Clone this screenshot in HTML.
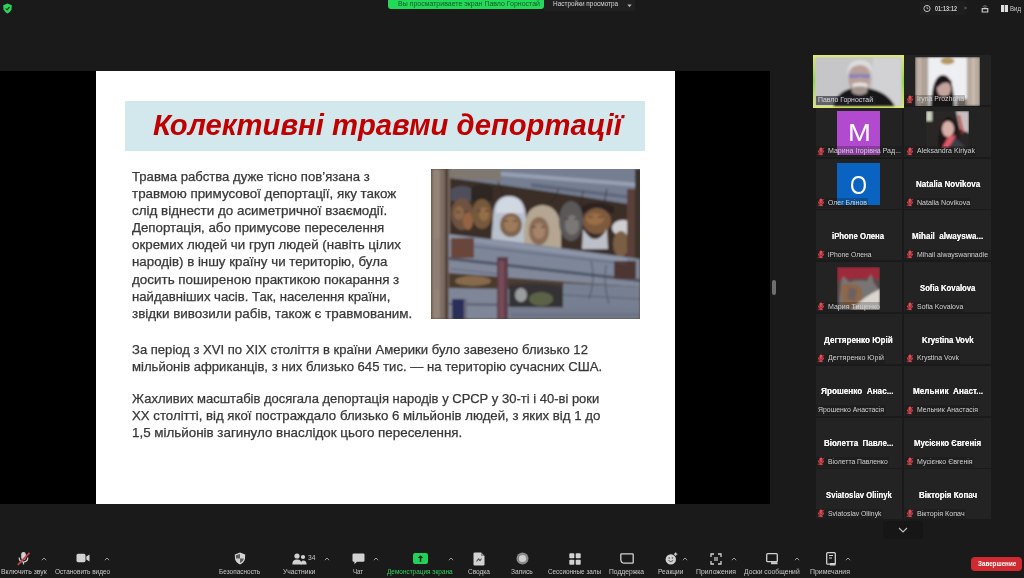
<!DOCTYPE html>
<html><head><meta charset="utf-8">
<style>
*{margin:0;padding:0;box-sizing:border-box}
html,body{width:1024px;height:578px;overflow:hidden;background:#1a1a1a;font-family:"Liberation Sans",sans-serif;position:relative}
.a{position:absolute}
.t{white-space:nowrap;line-height:1}
svg{display:block}
</style></head><body>

<svg class="a" style="left:2px;top:3px" width="11" height="11" viewBox="0 0 11 11"><path d="M5.5 0.6 L9.8 2.3 L9.5 6.3 Q8.5 9.1 5.5 10.5 Q2.5 9.1 1.5 6.3 L1.2 2.3 Z" fill="#2bd45c"/><path d="M3.6 5.4 L5.0 6.8 L7.5 4.0" stroke="#0c3d1a" stroke-width="1.2" fill="none"/></svg>
<div class="a" style="left:388.00px;top:-3.00px;width:156.00px;height:12.00px;background:#23d958;border-radius:3px"></div>
<div class="a t" style="left:398.00px;top:0.37px;font-size:7px;color:#155a2a;font-weight:normal;font-style:normal;transform:scaleX(0.9967);transform-origin:0 0;">Вы просматриваете экран Павло Горностай</div>
<div class="a" style="left:544.00px;top:0.00px;width:91.00px;height:10.50px;background:#202020;"></div>
<div class="a t" style="left:552.80px;top:0.07px;font-size:7px;color:#d8d8d8;font-weight:normal;font-style:normal;transform:scaleX(0.9197);transform-origin:0 0;">Настройки просмотра</div>
<svg class="a" style="left:627px;top:3.5px" width="5" height="4" viewBox="0 0 5 4"><path d="M0.3 0.5 L4.7 0.5 L2.5 3.3Z" fill="#b0b0b0"/></svg>
<div class="a" style="left:920.00px;top:1.00px;width:46.00px;height:14.00px;background:#1e1e1e;border-radius:2px"></div>
<svg class="a" style="left:923px;top:4px" width="8" height="9" viewBox="0 0 8 9"><circle cx="4" cy="4.5" r="3.1" stroke="#bdbdbd" stroke-width="1" fill="none"/><path d="M4 2.6v2h1.3" stroke="#bdbdbd" stroke-width="0.8" fill="none"/></svg>
<div class="a t" style="left:935.00px;top:4.53px;font-size:8px;color:#cfcfcf;font-weight:bold;font-style:normal;transform:scaleX(0.6868);transform-origin:0 0;">01:13:12</div>
<svg class="a" style="left:964px;top:6px" width="4" height="4" viewBox="0 0 4 4"><path d="M0.5 0.5 L3.5 2 L0.5 3.5z" fill="#555"/></svg>
<svg class="a" style="left:981px;top:3px" width="8" height="10" viewBox="0 0 8 10"><path d="M1.2 5.6h5.6v3.4h-5.6z" stroke="#d0d0d0" stroke-width="1.1" fill="none"/><path d="M1.8 3.6 Q4 1.6 6.2 3.6" stroke="#888" stroke-width="0.8" fill="none"/><path d="M2.8 4.6 Q4 3.6 5.2 4.6" stroke="#888" stroke-width="0.7" fill="none"/></svg>
<div class="a" style="left:1001.00px;top:5.00px;width:7.00px;height:7.00px;background:#dedede;"></div>
<div class="a" style="left:1004.00px;top:5.00px;width:1.00px;height:7.00px;background:#555;"></div>
<div class="a t" style="left:1010.00px;top:5.07px;font-size:7px;color:#cfcfcf;font-weight:normal;font-style:normal;transform:scaleX(0.8681);transform-origin:0 0;">Вид</div>
<div class="a" style="left:0.00px;top:71.00px;width:770.00px;height:433.00px;background:#000;"></div>
<div class="a" style="left:96.00px;top:71.00px;width:579.00px;height:433.00px;background:#fff;"></div>
<div class="a" style="left:125.00px;top:101.00px;width:520.00px;height:50.00px;background:#d2e8ec;"></div>
<div class="a t" style="left:152.80px;top:110.85px;font-size:29px;color:#c00000;font-weight:bold;font-style:italic;transform:scaleX(1.0078);transform-origin:0 0;">Колективні травми депортації</div>
<div class="a t" style="left:132.20px;top:170.67px;font-size:12.2px;color:#383838;font-weight:normal;font-style:normal;transform:scaleX(1.0773);transform-origin:0 0;-webkit-text-stroke:0.25px #383838;">Травма рабства дуже тісно пов’язана з</div>
<div class="a t" style="left:132.20px;top:187.82px;font-size:12.2px;color:#383838;font-weight:normal;font-style:normal;transform:scaleX(1.0985);transform-origin:0 0;-webkit-text-stroke:0.25px #383838;">травмою примусової депортації, яку також</div>
<div class="a t" style="left:132.20px;top:204.97px;font-size:12.2px;color:#383838;font-weight:normal;font-style:normal;transform:scaleX(1.1004);transform-origin:0 0;-webkit-text-stroke:0.25px #383838;">слід віднести до асиметричної взаємодії.</div>
<div class="a t" style="left:132.20px;top:222.12px;font-size:12.2px;color:#383838;font-weight:normal;font-style:normal;transform:scaleX(1.0891);transform-origin:0 0;-webkit-text-stroke:0.25px #383838;">Депортація, або примусове переселення</div>
<div class="a t" style="left:132.20px;top:239.27px;font-size:12.2px;color:#383838;font-weight:normal;font-style:normal;transform:scaleX(1.0929);transform-origin:0 0;-webkit-text-stroke:0.25px #383838;">окремих людей чи груп людей (навіть цілих</div>
<div class="a t" style="left:132.20px;top:256.42px;font-size:12.2px;color:#383838;font-weight:normal;font-style:normal;transform:scaleX(1.0911);transform-origin:0 0;-webkit-text-stroke:0.25px #383838;">народів) в іншу країну чи територію, була</div>
<div class="a t" style="left:132.20px;top:273.57px;font-size:12.2px;color:#383838;font-weight:normal;font-style:normal;transform:scaleX(1.1008);transform-origin:0 0;-webkit-text-stroke:0.25px #383838;">досить поширеною практикою покарання з</div>
<div class="a t" style="left:132.20px;top:290.72px;font-size:12.2px;color:#383838;font-weight:normal;font-style:normal;transform:scaleX(1.0778);transform-origin:0 0;-webkit-text-stroke:0.25px #383838;">найдавніших часів. Так, населення країни,</div>
<div class="a t" style="left:132.20px;top:307.87px;font-size:12.2px;color:#383838;font-weight:normal;font-style:normal;transform:scaleX(1.1018);transform-origin:0 0;-webkit-text-stroke:0.25px #383838;">звідки вивозили рабів, також є травмованим.</div>
<div class="a t" style="left:132.20px;top:343.97px;font-size:12.2px;color:#383838;font-weight:normal;font-style:normal;transform:scaleX(1.0716);transform-origin:0 0;-webkit-text-stroke:0.25px #383838;">За період з XVI по XIX століття в країни Америки було завезено близько 12</div>
<div class="a t" style="left:132.20px;top:361.07px;font-size:12.2px;color:#383838;font-weight:normal;font-style:normal;transform:scaleX(1.0753);transform-origin:0 0;-webkit-text-stroke:0.25px #383838;">мільйонів африканців, з них близько 645 тис. — на територію сучасних США.</div>
<div class="a t" style="left:132.20px;top:393.47px;font-size:12.2px;color:#383838;font-weight:normal;font-style:normal;transform:scaleX(1.0668);transform-origin:0 0;-webkit-text-stroke:0.25px #383838;">Жахливих масштабів досягала депортація народів у СРСР у 30-ті і 40-ві роки</div>
<div class="a t" style="left:132.20px;top:410.27px;font-size:12.2px;color:#383838;font-weight:normal;font-style:normal;transform:scaleX(1.0855);transform-origin:0 0;-webkit-text-stroke:0.25px #383838;">XX столітті, від якої постраждало близько 6 мільйонів людей, з яких від 1 до</div>
<div class="a t" style="left:132.20px;top:427.07px;font-size:12.2px;color:#383838;font-weight:normal;font-style:normal;transform:scaleX(1.0972);transform-origin:0 0;-webkit-text-stroke:0.25px #383838;">1,5 мільйонів загинуло внаслідок цього переселення.</div>
<svg class="a" style="left:431px;top:169px" width="209" height="150" viewBox="0 0 209 150">
<defs>
<filter id="bl" x="-5%" y="-5%" width="110%" height="110%"><feGaussianBlur stdDeviation="1.0"/></filter>
<clipPath id="pc"><rect width="209" height="150"/></clipPath>
</defs>
<g clip-path="url(#pc)">
<rect width="209" height="150" fill="#4a3c32"/>
<g filter="url(#bl)">
<!-- dark interior -->
<rect x="18" y="0" width="191" height="95" fill="#3a2e28"/>
<!-- top plank -->
<path d="M18 -2 L209 -2 L209 37 Q120 22 18 9 Z" fill="#767e92"/>
<path d="M18 -2 L70 -2 L70 12 L18 9Z" fill="#7e7870"/>
<path d="M70 3 L209 14 L209 18 L70 7Z" fill="#98a0b2"/>
<path d="M100 14 L209 28 L209 31 L100 18Z" fill="#5e6678"/>
<!-- left post -->
<rect x="0" y="0" width="19" height="150" fill="#7c6c62"/>
<rect x="2" y="0" width="7" height="150" fill="#948478"/>
<rect x="14" y="0" width="3" height="150" fill="#4e3a32"/>
<rect x="3" y="70" width="6" height="50" fill="#8e7e74"/>
<!-- face 1 -->
<path d="M20 20 Q30 14 42 20 L42 32 L20 32Z" fill="#50505c"/>
<ellipse cx="31" cy="45" rx="11" ry="16" fill="#6e5240"/>
<ellipse cx="28" cy="44" rx="5" ry="7" fill="#8a6848"/>
<ellipse cx="37" cy="52" rx="5" ry="9" fill="#946444"/>
<!-- face 2 -->
<path d="M40 19 Q51 12 62 19 L62 32 L40 32Z" fill="#2e2824"/>
<ellipse cx="51" cy="45" rx="10" ry="15" fill="#76583c"/>
<ellipse cx="53" cy="45" rx="5" ry="7" fill="#946e46"/>
<!-- white scarf woman -->
<path d="M62 50 Q62 27 78 27 Q95 27 95 50 L96 76 L60 76Z" fill="#b8c0cc"/>
<path d="M65 44 Q65 28 78 28 Q92 28 92 44Z" fill="#d2d8e2"/>
<ellipse cx="80" cy="56" rx="11" ry="12" fill="#806450"/>
<ellipse cx="80" cy="55" rx="7" ry="8" fill="#9c7c5c"/>
<!-- beige scarf woman -->
<path d="M93 62 Q94 36 112 36 Q129 37 130 62 L130 80 L93 80Z" fill="#b4a692"/>
<ellipse cx="108" cy="62" rx="10" ry="14" fill="#8a6c56"/>
<ellipse cx="108" cy="62" rx="6" ry="8" fill="#a4846a"/>
<!-- gray man -->
<ellipse cx="140" cy="52" rx="12" ry="20" fill="#5a5858"/>
<ellipse cx="141" cy="56" rx="7" ry="10" fill="#7a7876"/>
<!-- bearded man -->
<path d="M151 37 Q167 30 183 38 L183 44 L151 44Z" fill="#2a2420"/>
<ellipse cx="166" cy="52" rx="14" ry="13" fill="#7e5a3c"/>
<ellipse cx="164" cy="50" rx="9" ry="6" fill="#9a6e48"/>
<path d="M152 60 Q164 80 176 60 L177 80 L151 80Z" fill="#bcc0c8"/>
<!-- white-hat man -->
<ellipse cx="192" cy="59" rx="11" ry="8" fill="#cfcfd2"/>
<ellipse cx="190" cy="75" rx="8" ry="13" fill="#7a5e44"/>
<!-- right post -->
<rect x="196" y="20" width="8" height="90" fill="#5a4038"/>
<rect x="204" y="0" width="5" height="150" fill="#3a302a"/>
<!-- lower plank 1 sloping -->
<path d="M18 65 L100 75 L196 88 L209 90 L209 112 L18 90Z" fill="#7e869a"/>
<path d="M18 66 L196 89 L196 93 L18 70Z" fill="#8e96a8"/>
<path d="M18 88 L209 110 L209 113 L18 91Z" fill="#4e5668"/>
<!-- plank 2 -->
<path d="M18 91 L209 113 L209 118 L18 105Z" fill="#80889a"/>
<!-- left gap with faces -->
<path d="M18 104 L70 108 L70 120 L18 120Z" fill="#4a3a2c"/>
<ellipse cx="42" cy="112" rx="18" ry="5" fill="#866a4c"/>
<!-- plank 3 left -->
<path d="M18 119 L78 120 L78 150 L18 150Z" fill="#7e8698"/>
<path d="M18 134 L78 135 L78 137 L18 136Z" fill="#545c6e"/>
<!-- right gap with hands -->
<path d="M78 116 Q110 112 132 118 L132 138 L78 138Z" fill="#343234"/>
<ellipse cx="90" cy="126" rx="6" ry="7" fill="#9a9c9e"/>
<ellipse cx="110" cy="130" rx="12" ry="7" fill="#5c6246"/>
<!-- right lower plank -->
<path d="M132 114 L209 118 L209 140 L132 140Z" fill="#768092"/>
<path d="M78 138 L209 139 L209 150 L78 150Z" fill="#747c8e"/>
<!-- patches -->
<rect x="20" y="69" width="23" height="20" fill="#6a4438"/>
<rect x="183" y="92" width="22" height="18" fill="#4e3632"/>
<!-- middle post -->
<rect x="66" y="88" width="11" height="62" fill="#5a3c48"/>
<rect x="68" y="92" width="5" height="58" fill="#7a4c56"/>
<!-- bracket -->
<rect x="21" y="130" width="12" height="20" fill="#2c2e58"/>
<rect x="33" y="130" width="3" height="20" fill="#6a6a7a"/>
<!-- details -->
<g opacity="0.85">
<path d="M50 18 L40 30 M67 12 L72 26 M128 20 L120 34 M152 22 L150 36 M176 20 L172 40" stroke="#2a2420" stroke-width="0.9" fill="none"/>
<path d="M25 43 h4 M33 43 h4 M46 42 h4 M54 42 h4 M73 52 h4 M82 52 h4 M101 58 h4 M110 58 h4 M134 50 h4 M143 50 h4 M157 48 h5 M167 48 h5" stroke="#3a2a22" stroke-width="1.2"/>

<path d="M20 75 L196 95 M20 100 L78 106 M132 126 L209 130 M80 146 L209 146" stroke="#4a5264" stroke-width="0.8" fill="none"/>
<path d="M160 92 Q165 110 158 130 M175 96 Q172 115 178 135" stroke="#3e4656" stroke-width="0.9" fill="none"/>
</g>
</g>
</g>
</svg>
<div class="a" style="left:772.00px;top:280.00px;width:4.00px;height:15.00px;background:#6e6e6e;border-radius:2px"></div>
<div class="a" style="left:815.50px;top:55.00px;width:86.50px;height:50.00px;background:#232323;"></div>
<div class="a" style="left:904.00px;top:55.00px;width:87.00px;height:50.00px;background:#232323;"></div>
<div class="a" style="left:815.50px;top:106.80px;width:86.50px;height:50.00px;background:#232323;"></div>
<div class="a" style="left:904.00px;top:106.80px;width:87.00px;height:50.00px;background:#232323;"></div>
<div class="a" style="left:815.50px;top:158.60px;width:86.50px;height:50.00px;background:#232323;"></div>
<div class="a" style="left:904.00px;top:158.60px;width:87.00px;height:50.00px;background:#232323;"></div>
<div class="a" style="left:815.50px;top:210.40px;width:86.50px;height:50.00px;background:#232323;"></div>
<div class="a" style="left:904.00px;top:210.40px;width:87.00px;height:50.00px;background:#232323;"></div>
<div class="a" style="left:815.50px;top:262.20px;width:86.50px;height:50.00px;background:#232323;"></div>
<div class="a" style="left:904.00px;top:262.20px;width:87.00px;height:50.00px;background:#232323;"></div>
<div class="a" style="left:815.50px;top:314.00px;width:86.50px;height:50.00px;background:#232323;"></div>
<div class="a" style="left:904.00px;top:314.00px;width:87.00px;height:50.00px;background:#232323;"></div>
<div class="a" style="left:815.50px;top:365.80px;width:86.50px;height:50.00px;background:#232323;"></div>
<div class="a" style="left:904.00px;top:365.80px;width:87.00px;height:50.00px;background:#232323;"></div>
<div class="a" style="left:815.50px;top:417.60px;width:86.50px;height:50.00px;background:#232323;"></div>
<div class="a" style="left:904.00px;top:417.60px;width:87.00px;height:50.00px;background:#232323;"></div>
<div class="a" style="left:815.50px;top:469.40px;width:86.50px;height:50.00px;background:#232323;"></div>
<div class="a" style="left:904.00px;top:469.40px;width:87.00px;height:50.00px;background:#232323;"></div>
<svg class="a" style="left:813px;top:54.5px" width="91" height="53" viewBox="0 0 91 53">
<defs><filter id="gb"><feGaussianBlur stdDeviation="0.9"/></filter>
<linearGradient id="bd" x1="0" y1="0" x2="0" y2="1"><stop offset="0" stop-color="#e2ec6c"/><stop offset="0.5" stop-color="#86dc36"/><stop offset="1" stop-color="#e2ec6c"/></linearGradient></defs>
<rect x="0" y="0" width="91" height="53" fill="url(#bd)"/>
<rect x="2.5" y="2.5" width="86" height="48" fill="#c9c9cb"/>
<g filter="url(#gb)">
<rect x="2.5" y="2.5" width="86" height="48" fill="#c6c6c8"/>
<rect x="60" y="2.5" width="28" height="48" fill="#d2d2d4"/>
<path d="M20 51 Q24 36 40 33 L54 33 Q74 36 82 51Z" fill="#181818"/>
<ellipse cx="46.5" cy="24" rx="11" ry="15" fill="#b8a098"/>
<path d="M34 20 Q34 5 47 5 Q60 5 60 20 Q58 11 47 10 Q36 11 34 20Z" fill="#dcdcdc"/>
<path d="M36 19 H57 V23 Q52 24 47 22 Q42 24 36 23Z" fill="#8a84b8"/>
<path d="M39 29 Q47 26 55 29 L54 32 Q47 30 40 32Z" fill="#e4e4e4"/>
<ellipse cx="46.5" cy="36" rx="8" ry="4" fill="#a09490"/>
</g>
</svg>
<div class="a" style="left:815.50px;top:95.50px;width:60.00px;height:9.50px;background:rgba(30,30,40,0.6);"></div>
<div class="a t" style="left:818.00px;top:97.04px;font-size:6.8px;color:#d8d8d8;font-weight:normal;font-style:normal;transform:scaleX(1.0153);transform-origin:0 0;">Павло Горностай</div>
<svg class="a" style="left:915px;top:56.5px" width="65" height="49" viewBox="0 0 65 49">
<defs><filter id="ib"><feGaussianBlur stdDeviation="0.9"/></filter></defs>
<g filter="url(#ib)">
<rect width="65" height="49" fill="#e4e4e6"/>
<rect x="0" y="0" width="13" height="49" fill="#b0a296"/>
<rect x="3" y="0" width="3" height="49" fill="#c4b6aa"/>
<rect x="52" y="0" width="13" height="49" fill="#b8aa9e"/>
<rect x="57" y="0" width="3" height="49" fill="#cabcb0"/>
<rect x="14" y="0" width="37" height="49" fill="#eeeff2"/>
<ellipse cx="32.5" cy="4" rx="7" ry="3.5" fill="#b49660"/>
<path d="M16 49 Q17 18 28 18 Q39 18 39 49Z" fill="#1c1616"/>
<ellipse cx="29" cy="32" rx="7" ry="8" fill="#c4a49c"/>
<path d="M21 27 Q24 19 36 23 L37 27 Q29 23 23 30Z" fill="#1c1616"/>
<path d="M42 49 L42 42 L52 42 L52 49Z" fill="#8a8078"/>
</g>
</svg>
<div class="a" style="left:905.00px;top:94.50px;width:60.00px;height:10.00px;background:rgba(16,16,16,0.25);"></div>
<svg class="a" style="left:906.0px;top:94.8px" width="8" height="9" viewBox="0 0 8 9"><rect x="2.4" y="0.6" width="3.2" height="4.8" rx="1.5" fill="#e84a54"/><path d="M1.4 3.6 Q1.4 6.4 4 6.4 Q6.6 6.4 6.6 3.6" stroke="#e84a54" stroke-width="1" fill="none"/><rect x="3.4" y="6.2" width="1.2" height="1.3" fill="#e84a54"/><rect x="2.2" y="7.2" width="3.6" height="0.9" fill="#e84a54"/><path d="M0.8 8 L7.2 0.8" stroke="#c8343c" stroke-width="0.9"/></svg>
<div class="a t" style="left:916.50px;top:95.47px;font-size:7px;color:#d0d0d0;font-weight:normal;font-style:normal;transform:scaleX(0.9898);transform-origin:0 0;">Iryna Prozhoha</div>
<div class="a" style="left:836.70px;top:111.00px;width:43.30px;height:43.50px;background:#b24ad0;"></div>
<div class="a t" style="left:847.60px;top:120.86px;font-size:24.5px;color:#ffffff;font-weight:normal;font-style:normal;transform:scaleX(1.1200);transform-origin:0 0;">M</div>
<div class="a" style="left:816.00px;top:146.30px;width:86.00px;height:10.00px;background:rgba(16,16,16,0.25);"></div>
<svg class="a" style="left:817.0px;top:146.6px" width="8" height="9" viewBox="0 0 8 9"><rect x="2.4" y="0.6" width="3.2" height="4.8" rx="1.5" fill="#e84a54"/><path d="M1.4 3.6 Q1.4 6.4 4 6.4 Q6.6 6.4 6.6 3.6" stroke="#e84a54" stroke-width="1" fill="none"/><rect x="3.4" y="6.2" width="1.2" height="1.3" fill="#e84a54"/><rect x="2.2" y="7.2" width="3.6" height="0.9" fill="#e84a54"/><path d="M0.8 8 L7.2 0.8" stroke="#c8343c" stroke-width="0.9"/></svg>
<div class="a t" style="left:827.50px;top:147.27px;font-size:7px;color:#d0d0d0;font-weight:normal;font-style:normal;transform:scaleX(1.0045);transform-origin:0 0;">Марина Ігорівна Рад...</div>
<svg class="a" style="left:926px;top:110.7px" width="43" height="37" viewBox="0 0 43 37">
<defs><filter id="ab"><feGaussianBlur stdDeviation="0.9"/></filter></defs>
<g filter="url(#ab)">
<rect width="43" height="37" fill="#2a2626"/>
<rect x="0" y="0" width="6" height="10" fill="#c8d0c0"/>
<path d="M30 0 L43 0 L43 22 L34 18Z" fill="#c8c0c0"/>
<path d="M34 4 L38 22 L36 22 L32 4Z" fill="#c03030"/>
<path d="M12 37 Q12 10 22 6 Q32 8 32 22 L36 37Z" fill="#1a1414"/>
<ellipse cx="22" cy="18" rx="6" ry="8" fill="#d8b0a8"/>
<path d="M16 37 L22 26 L30 24 L24 37Z" fill="#e05a6a"/>
<path d="M22 37 L30 26 L40 37Z" fill="#3a3e44"/>
</g>
</svg>
<div class="a" style="left:905.00px;top:146.30px;width:71.00px;height:10.00px;background:rgba(16,16,16,0.25);"></div>
<svg class="a" style="left:906.0px;top:146.6px" width="8" height="9" viewBox="0 0 8 9"><rect x="2.4" y="0.6" width="3.2" height="4.8" rx="1.5" fill="#e84a54"/><path d="M1.4 3.6 Q1.4 6.4 4 6.4 Q6.6 6.4 6.6 3.6" stroke="#e84a54" stroke-width="1" fill="none"/><rect x="3.4" y="6.2" width="1.2" height="1.3" fill="#e84a54"/><rect x="2.2" y="7.2" width="3.6" height="0.9" fill="#e84a54"/><path d="M0.8 8 L7.2 0.8" stroke="#c8343c" stroke-width="0.9"/></svg>
<div class="a t" style="left:916.50px;top:147.27px;font-size:7px;color:#d0d0d0;font-weight:normal;font-style:normal;transform:scaleX(0.9988);transform-origin:0 0;">Aleksandra Kiriyak</div>
<div class="a" style="left:836.70px;top:162.60px;width:43.30px;height:42.80px;background:#0b63c1;"></div>
<div class="a t" style="left:849.60px;top:171.59px;font-size:26px;color:#ffffff;font-weight:normal;font-style:normal;transform:scaleX(0.8400);transform-origin:0 0;">O</div>
<div class="a" style="left:816.00px;top:198.10px;width:52.00px;height:10.00px;background:rgba(16,16,16,0.25);"></div>
<svg class="a" style="left:817.0px;top:198.4px" width="8" height="9" viewBox="0 0 8 9"><rect x="2.4" y="0.6" width="3.2" height="4.8" rx="1.5" fill="#e84a54"/><path d="M1.4 3.6 Q1.4 6.4 4 6.4 Q6.6 6.4 6.6 3.6" stroke="#e84a54" stroke-width="1" fill="none"/><rect x="3.4" y="6.2" width="1.2" height="1.3" fill="#e84a54"/><rect x="2.2" y="7.2" width="3.6" height="0.9" fill="#e84a54"/><path d="M0.8 8 L7.2 0.8" stroke="#c8343c" stroke-width="0.9"/></svg>
<div class="a t" style="left:827.50px;top:199.07px;font-size:7px;color:#d0d0d0;font-weight:normal;font-style:normal;transform:scaleX(0.9852);transform-origin:0 0;">Олег Блінов</div>
<div class="a t" style="left:916.30px;top:180.20px;font-size:8.5px;color:#f2f2f2;font-weight:bold;font-style:normal;transform:scaleX(0.9437);transform-origin:0 0;text-shadow:0 0 0.4px #fff;">Natalia Novikova</div>
<div class="a" style="left:905.00px;top:198.10px;width:66.00px;height:10.00px;background:rgba(16,16,16,0.25);"></div>
<svg class="a" style="left:906.0px;top:198.4px" width="8" height="9" viewBox="0 0 8 9"><rect x="2.4" y="0.6" width="3.2" height="4.8" rx="1.5" fill="#e84a54"/><path d="M1.4 3.6 Q1.4 6.4 4 6.4 Q6.6 6.4 6.6 3.6" stroke="#e84a54" stroke-width="1" fill="none"/><rect x="3.4" y="6.2" width="1.2" height="1.3" fill="#e84a54"/><rect x="2.2" y="7.2" width="3.6" height="0.9" fill="#e84a54"/><path d="M0.8 8 L7.2 0.8" stroke="#c8343c" stroke-width="0.9"/></svg>
<div class="a t" style="left:916.50px;top:199.07px;font-size:7px;color:#d0d0d0;font-weight:normal;font-style:normal;transform:scaleX(1.0127);transform-origin:0 0;">Natalia Novikova</div>
<div class="a t" style="left:832.40px;top:232.00px;font-size:8.5px;color:#f2f2f2;font-weight:bold;font-style:normal;transform:scaleX(0.9128);transform-origin:0 0;text-shadow:0 0 0.4px #fff;">iPhone Олена</div>
<div class="a" style="left:816.00px;top:249.90px;width:56.00px;height:10.00px;background:rgba(16,16,16,0.25);"></div>
<svg class="a" style="left:817.0px;top:250.2px" width="8" height="9" viewBox="0 0 8 9"><rect x="2.4" y="0.6" width="3.2" height="4.8" rx="1.5" fill="#e84a54"/><path d="M1.4 3.6 Q1.4 6.4 4 6.4 Q6.6 6.4 6.6 3.6" stroke="#e84a54" stroke-width="1" fill="none"/><rect x="3.4" y="6.2" width="1.2" height="1.3" fill="#e84a54"/><rect x="2.2" y="7.2" width="3.6" height="0.9" fill="#e84a54"/><path d="M0.8 8 L7.2 0.8" stroke="#c8343c" stroke-width="0.9"/></svg>
<div class="a t" style="left:827.50px;top:250.87px;font-size:7px;color:#d0d0d0;font-weight:normal;font-style:normal;transform:scaleX(0.9700);transform-origin:0 0;">iPhone Олена</div>
<div class="a t" style="left:912.20px;top:232.00px;font-size:8.5px;color:#f2f2f2;font-weight:bold;font-style:normal;transform:scaleX(0.9491);transform-origin:0 0;text-shadow:0 0 0.4px #fff;">Mihail&nbsp; alwayswa...</div>
<div class="a" style="left:905.00px;top:249.90px;width:85.00px;height:10.00px;background:rgba(16,16,16,0.25);"></div>
<svg class="a" style="left:906.0px;top:250.2px" width="8" height="9" viewBox="0 0 8 9"><rect x="2.4" y="0.6" width="3.2" height="4.8" rx="1.5" fill="#e84a54"/><path d="M1.4 3.6 Q1.4 6.4 4 6.4 Q6.6 6.4 6.6 3.6" stroke="#e84a54" stroke-width="1" fill="none"/><rect x="3.4" y="6.2" width="1.2" height="1.3" fill="#e84a54"/><rect x="2.2" y="7.2" width="3.6" height="0.9" fill="#e84a54"/><path d="M0.8 8 L7.2 0.8" stroke="#c8343c" stroke-width="0.9"/></svg>
<div class="a t" style="left:916.50px;top:250.87px;font-size:7px;color:#d0d0d0;font-weight:normal;font-style:normal;transform:scaleX(0.9917);transform-origin:0 0;">Mihail alwayswannadie</div>
<svg class="a" style="left:837px;top:266.5px" width="43" height="43" viewBox="0 0 43 43">
<defs><filter id="cb"><feGaussianBlur stdDeviation="0.9"/></filter></defs>
<g filter="url(#cb)">
<rect width="43" height="43" fill="#9c2a3a"/>
<path d="M0 14 Q20 10 43 12 L43 43 L0 43Z" fill="#5a4a4a"/>
<path d="M2 38 L4 16 L6 9 L12 15 Q22 12 30 14 L34 7 L37 16 Q42 22 43 28 L43 43 L2 43Z" fill="#787474"/>
<path d="M4 18 Q14 14 24 20 L26 36 Q16 42 6 38Z" fill="#8e6848"/>
<path d="M12 20 L20 22 L18 34 L10 32Z" fill="#6e6060"/>
<path d="M14 43 Q26 30 43 22 L43 43Z" fill="#dcd6d0"/>
</g>
</svg>
<div class="a" style="left:816.00px;top:301.70px;width:64.00px;height:10.00px;background:rgba(16,16,16,0.25);"></div>
<svg class="a" style="left:817.0px;top:302.0px" width="8" height="9" viewBox="0 0 8 9"><rect x="2.4" y="0.6" width="3.2" height="4.8" rx="1.5" fill="#e84a54"/><path d="M1.4 3.6 Q1.4 6.4 4 6.4 Q6.6 6.4 6.6 3.6" stroke="#e84a54" stroke-width="1" fill="none"/><rect x="3.4" y="6.2" width="1.2" height="1.3" fill="#e84a54"/><rect x="2.2" y="7.2" width="3.6" height="0.9" fill="#e84a54"/><path d="M0.8 8 L7.2 0.8" stroke="#c8343c" stroke-width="0.9"/></svg>
<div class="a t" style="left:827.50px;top:302.67px;font-size:7px;color:#d0d0d0;font-weight:normal;font-style:normal;transform:scaleX(1.0057);transform-origin:0 0;">Мария Тищенко</div>
<div class="a t" style="left:920.00px;top:283.80px;font-size:8.5px;color:#f2f2f2;font-weight:bold;font-style:normal;transform:scaleX(0.9091);transform-origin:0 0;text-shadow:0 0 0.4px #fff;">Sofia Kovalova</div>
<div class="a" style="left:905.00px;top:301.70px;width:59.00px;height:10.00px;background:rgba(16,16,16,0.25);"></div>
<svg class="a" style="left:906.0px;top:302.0px" width="8" height="9" viewBox="0 0 8 9"><rect x="2.4" y="0.6" width="3.2" height="4.8" rx="1.5" fill="#e84a54"/><path d="M1.4 3.6 Q1.4 6.4 4 6.4 Q6.6 6.4 6.6 3.6" stroke="#e84a54" stroke-width="1" fill="none"/><rect x="3.4" y="6.2" width="1.2" height="1.3" fill="#e84a54"/><rect x="2.2" y="7.2" width="3.6" height="0.9" fill="#e84a54"/><path d="M0.8 8 L7.2 0.8" stroke="#c8343c" stroke-width="0.9"/></svg>
<div class="a t" style="left:916.50px;top:302.67px;font-size:7px;color:#d0d0d0;font-weight:normal;font-style:normal;transform:scaleX(0.9914);transform-origin:0 0;">Sofia Kovalova</div>
<div class="a t" style="left:823.50px;top:335.60px;font-size:8.5px;color:#f2f2f2;font-weight:bold;font-style:normal;transform:scaleX(0.9576);transform-origin:0 0;text-shadow:0 0 0.4px #fff;">Дегтяренко Юрій</div>
<div class="a" style="left:816.00px;top:353.50px;width:69.00px;height:10.00px;background:rgba(16,16,16,0.25);"></div>
<svg class="a" style="left:817.0px;top:353.8px" width="8" height="9" viewBox="0 0 8 9"><rect x="2.4" y="0.6" width="3.2" height="4.8" rx="1.5" fill="#e84a54"/><path d="M1.4 3.6 Q1.4 6.4 4 6.4 Q6.6 6.4 6.6 3.6" stroke="#e84a54" stroke-width="1" fill="none"/><rect x="3.4" y="6.2" width="1.2" height="1.3" fill="#e84a54"/><rect x="2.2" y="7.2" width="3.6" height="0.9" fill="#e84a54"/><path d="M0.8 8 L7.2 0.8" stroke="#c8343c" stroke-width="0.9"/></svg>
<div class="a t" style="left:827.50px;top:354.47px;font-size:7px;color:#d0d0d0;font-weight:normal;font-style:normal;transform:scaleX(1.0136);transform-origin:0 0;">Дегтяренко Юрій</div>
<div class="a t" style="left:921.60px;top:335.60px;font-size:8.5px;color:#f2f2f2;font-weight:bold;font-style:normal;transform:scaleX(0.9204);transform-origin:0 0;text-shadow:0 0 0.4px #fff;">Krystina Vovk</div>
<div class="a" style="left:905.00px;top:353.50px;width:55.00px;height:10.00px;background:rgba(16,16,16,0.25);"></div>
<svg class="a" style="left:906.0px;top:353.8px" width="8" height="9" viewBox="0 0 8 9"><rect x="2.4" y="0.6" width="3.2" height="4.8" rx="1.5" fill="#e84a54"/><path d="M1.4 3.6 Q1.4 6.4 4 6.4 Q6.6 6.4 6.6 3.6" stroke="#e84a54" stroke-width="1" fill="none"/><rect x="3.4" y="6.2" width="1.2" height="1.3" fill="#e84a54"/><rect x="2.2" y="7.2" width="3.6" height="0.9" fill="#e84a54"/><path d="M0.8 8 L7.2 0.8" stroke="#c8343c" stroke-width="0.9"/></svg>
<div class="a t" style="left:916.50px;top:354.47px;font-size:7px;color:#d0d0d0;font-weight:normal;font-style:normal;transform:scaleX(0.9901);transform-origin:0 0;">Krystina Vovk</div>
<div class="a t" style="left:821.40px;top:387.40px;font-size:8.5px;color:#f2f2f2;font-weight:bold;font-style:normal;transform:scaleX(0.9627);transform-origin:0 0;text-shadow:0 0 0.4px #fff;">Ярошенко&nbsp; Анас...</div>
<div class="a" style="left:816.00px;top:405.30px;width:70.00px;height:10.00px;background:rgba(16,16,16,0.25);"></div>
<div class="a t" style="left:818.00px;top:406.27px;font-size:7px;color:#d0d0d0;font-weight:normal;font-style:normal;transform:scaleX(0.9866);transform-origin:0 0;">Ярошенко Анастасія</div>
<div class="a t" style="left:912.50px;top:387.40px;font-size:8.5px;color:#f2f2f2;font-weight:bold;font-style:normal;transform:scaleX(0.9603);transform-origin:0 0;text-shadow:0 0 0.4px #fff;">Мельник&nbsp; Анаст...</div>
<div class="a" style="left:905.00px;top:405.30px;width:74.00px;height:10.00px;background:rgba(16,16,16,0.25);"></div>
<svg class="a" style="left:906.0px;top:405.6px" width="8" height="9" viewBox="0 0 8 9"><rect x="2.4" y="0.6" width="3.2" height="4.8" rx="1.5" fill="#e84a54"/><path d="M1.4 3.6 Q1.4 6.4 4 6.4 Q6.6 6.4 6.6 3.6" stroke="#e84a54" stroke-width="1" fill="none"/><rect x="3.4" y="6.2" width="1.2" height="1.3" fill="#e84a54"/><rect x="2.2" y="7.2" width="3.6" height="0.9" fill="#e84a54"/><path d="M0.8 8 L7.2 0.8" stroke="#c8343c" stroke-width="0.9"/></svg>
<div class="a t" style="left:916.50px;top:406.27px;font-size:7px;color:#d0d0d0;font-weight:normal;font-style:normal;transform:scaleX(0.9856);transform-origin:0 0;">Мельник Анастасія</div>
<div class="a t" style="left:823.50px;top:439.20px;font-size:8.5px;color:#f2f2f2;font-weight:bold;font-style:normal;transform:scaleX(0.9364);transform-origin:0 0;text-shadow:0 0 0.4px #fff;">Віолетта&nbsp; Павле...</div>
<div class="a" style="left:816.00px;top:457.10px;width:73.00px;height:10.00px;background:rgba(16,16,16,0.25);"></div>
<svg class="a" style="left:817.0px;top:457.4px" width="8" height="9" viewBox="0 0 8 9"><rect x="2.4" y="0.6" width="3.2" height="4.8" rx="1.5" fill="#e84a54"/><path d="M1.4 3.6 Q1.4 6.4 4 6.4 Q6.6 6.4 6.6 3.6" stroke="#e84a54" stroke-width="1" fill="none"/><rect x="3.4" y="6.2" width="1.2" height="1.3" fill="#e84a54"/><rect x="2.2" y="7.2" width="3.6" height="0.9" fill="#e84a54"/><path d="M0.8 8 L7.2 0.8" stroke="#c8343c" stroke-width="0.9"/></svg>
<div class="a t" style="left:827.50px;top:458.07px;font-size:7px;color:#d0d0d0;font-weight:normal;font-style:normal;transform:scaleX(0.9747);transform-origin:0 0;">Віолетта Павленко</div>
<div class="a t" style="left:914.00px;top:439.20px;font-size:8.5px;color:#f2f2f2;font-weight:bold;font-style:normal;transform:scaleX(0.9277);transform-origin:0 0;text-shadow:0 0 0.4px #fff;">Мусієнко Євгенія</div>
<div class="a" style="left:905.00px;top:457.10px;width:69.00px;height:10.00px;background:rgba(16,16,16,0.25);"></div>
<svg class="a" style="left:906.0px;top:457.4px" width="8" height="9" viewBox="0 0 8 9"><rect x="2.4" y="0.6" width="3.2" height="4.8" rx="1.5" fill="#e84a54"/><path d="M1.4 3.6 Q1.4 6.4 4 6.4 Q6.6 6.4 6.6 3.6" stroke="#e84a54" stroke-width="1" fill="none"/><rect x="3.4" y="6.2" width="1.2" height="1.3" fill="#e84a54"/><rect x="2.2" y="7.2" width="3.6" height="0.9" fill="#e84a54"/><path d="M0.8 8 L7.2 0.8" stroke="#c8343c" stroke-width="0.9"/></svg>
<div class="a t" style="left:916.50px;top:458.07px;font-size:7px;color:#d0d0d0;font-weight:normal;font-style:normal;transform:scaleX(1.0116);transform-origin:0 0;">Мусієнко Євгенія</div>
<div class="a t" style="left:825.50px;top:491.00px;font-size:8.5px;color:#f2f2f2;font-weight:bold;font-style:normal;transform:scaleX(0.9056);transform-origin:0 0;text-shadow:0 0 0.4px #fff;">Sviatoslav Oliinyk</div>
<div class="a" style="left:816.00px;top:508.90px;width:67.00px;height:10.00px;background:rgba(16,16,16,0.25);"></div>
<svg class="a" style="left:817.0px;top:509.2px" width="8" height="9" viewBox="0 0 8 9"><rect x="2.4" y="0.6" width="3.2" height="4.8" rx="1.5" fill="#e84a54"/><path d="M1.4 3.6 Q1.4 6.4 4 6.4 Q6.6 6.4 6.6 3.6" stroke="#e84a54" stroke-width="1" fill="none"/><rect x="3.4" y="6.2" width="1.2" height="1.3" fill="#e84a54"/><rect x="2.2" y="7.2" width="3.6" height="0.9" fill="#e84a54"/><path d="M0.8 8 L7.2 0.8" stroke="#c8343c" stroke-width="0.9"/></svg>
<div class="a t" style="left:827.50px;top:509.87px;font-size:7px;color:#d0d0d0;font-weight:normal;font-style:normal;transform:scaleX(0.9752);transform-origin:0 0;">Sviatoslav Oliinyk</div>
<div class="a t" style="left:918.80px;top:491.00px;font-size:8.5px;color:#f2f2f2;font-weight:bold;font-style:normal;transform:scaleX(0.9411);transform-origin:0 0;text-shadow:0 0 0.4px #fff;">Вікторія Копач</div>
<div class="a" style="left:905.00px;top:508.90px;width:61.00px;height:10.00px;background:rgba(16,16,16,0.25);"></div>
<svg class="a" style="left:906.0px;top:509.2px" width="8" height="9" viewBox="0 0 8 9"><rect x="2.4" y="0.6" width="3.2" height="4.8" rx="1.5" fill="#e84a54"/><path d="M1.4 3.6 Q1.4 6.4 4 6.4 Q6.6 6.4 6.6 3.6" stroke="#e84a54" stroke-width="1" fill="none"/><rect x="3.4" y="6.2" width="1.2" height="1.3" fill="#e84a54"/><rect x="2.2" y="7.2" width="3.6" height="0.9" fill="#e84a54"/><path d="M0.8 8 L7.2 0.8" stroke="#c8343c" stroke-width="0.9"/></svg>
<div class="a t" style="left:916.50px;top:509.87px;font-size:7px;color:#d0d0d0;font-weight:normal;font-style:normal;transform:scaleX(1.0189);transform-origin:0 0;">Вікторія Копач</div>
<div class="a" style="left:883.00px;top:521.00px;width:39.50px;height:17.50px;background:#161616;border-radius:3px"></div>
<svg class="a" style="left:898px;top:527px" width="10" height="6" viewBox="0 0 10 6"><path d="M1 1 L5 5 L9 1" stroke="#bbb" stroke-width="1.2" fill="none"/></svg>
<svg class="a" style="left:16px;top:551px" width="15" height="15" viewBox="0 0 15 15">
<rect x="5.2" y="1" width="4.6" height="8" rx="2.3" fill="#d2d2d2"/>
<path d="M3.2 6.6 Q3.2 11 7.5 11 Q11.8 11 11.8 6.6" stroke="#d2d2d2" stroke-width="1.2" fill="none"/>
<rect x="6.9" y="11" width="1.2" height="2.4" fill="#d2d2d2"/>
<path d="M1.8 13.8 L13.6 1.8" stroke="#c8404c" stroke-width="1.8"/></svg>
<div class="a t" style="left:1.30px;top:568.74px;font-size:6.8px;color:#c8c8c8;font-weight:normal;font-style:normal;transform:scaleX(1.0082);transform-origin:0 0;">Включить звук</div>
<svg class="a" style="left:41.0px;top:556.5px" width="6" height="4" viewBox="0 0 6 4"><path d="M0.8 3.2 L3 1 L5.2 3.2" stroke="#9a9a9a" stroke-width="1" fill="none"/></svg>
<svg class="a" style="left:75.5px;top:552.5px" width="14" height="10" viewBox="0 0 14 10">
<rect x="0.5" y="0.8" width="9" height="8.4" rx="1.6" fill="#d2d2d2"/>
<path d="M10.3 3.6 L13.5 1.4 L13.5 8.6 L10.3 6.4Z" fill="#d2d2d2"/></svg>
<div class="a t" style="left:54.60px;top:568.74px;font-size:6.8px;color:#c8c8c8;font-weight:normal;font-style:normal;transform:scaleX(0.9530);transform-origin:0 0;">Остановить видео</div>
<svg class="a" style="left:104.0px;top:556.5px" width="6" height="4" viewBox="0 0 6 4"><path d="M0.8 3.2 L3 1 L5.2 3.2" stroke="#9a9a9a" stroke-width="1" fill="none"/></svg>
<svg class="a" style="left:233.5px;top:552px" width="12" height="13" viewBox="0 0 12 13">
<path d="M6 0.6 L11.2 2.4 L11 7 Q10 10.8 6 12.4 Q2 10.8 1 7 L0.8 2.4Z" fill="#d2d2d2"/>
<path d="M6 2 L6 6.5 L10 6.5 Q9.3 9.8 6 11 L6 6.5 L2 6.5 L1.9 3.3Z" fill="#5a5a5a"/></svg>
<div class="a t" style="left:218.90px;top:568.74px;font-size:6.8px;color:#c8c8c8;font-weight:normal;font-style:normal;transform:scaleX(0.9502);transform-origin:0 0;">Безопасность</div>
<svg class="a" style="left:291.5px;top:552.5px" width="15" height="12" viewBox="0 0 15 12">
<circle cx="5" cy="3" r="2.6" fill="#d2d2d2"/><path d="M0.3 11.5 Q0.3 6.6 5 6.6 Q9.7 6.6 9.7 11.5Z" fill="#d2d2d2"/>
<circle cx="11" cy="4" r="2.1" fill="#d2d2d2"/><path d="M8.6 11.5 Q9 7.4 11.2 7.4 Q14.6 7.4 14.6 11.5Z" fill="#d2d2d2"/></svg>
<div class="a t" style="left:308.00px;top:554.37px;font-size:7px;color:#c8c8c8;font-weight:normal;font-style:normal;transform:scaleX(0.9491);transform-origin:0 0;">34</div>
<div class="a t" style="left:283.00px;top:568.74px;font-size:6.8px;color:#c8c8c8;font-weight:normal;font-style:normal;transform:scaleX(0.9974);transform-origin:0 0;">Участники</div>
<svg class="a" style="left:324.4px;top:556.5px" width="6" height="4" viewBox="0 0 6 4"><path d="M0.8 3.2 L3 1 L5.2 3.2" stroke="#9a9a9a" stroke-width="1" fill="none"/></svg>
<svg class="a" style="left:352px;top:552.5px" width="13" height="12" viewBox="0 0 13 12">
<path d="M1.8 0.5 H11.2 Q12.5 0.5 12.5 1.8 V7.4 Q12.5 8.7 11.2 8.7 H5 L2.4 11.2 V8.7 H1.8 Q0.5 8.7 0.5 7.4 V1.8 Q0.5 0.5 1.8 0.5Z" fill="#d2d2d2"/></svg>
<div class="a t" style="left:353.30px;top:568.74px;font-size:6.8px;color:#c8c8c8;font-weight:normal;font-style:normal;transform:scaleX(0.8953);transform-origin:0 0;">Чат</div>
<svg class="a" style="left:373.0px;top:556.5px" width="6" height="4" viewBox="0 0 6 4"><path d="M0.8 3.2 L3 1 L5.2 3.2" stroke="#9a9a9a" stroke-width="1" fill="none"/></svg>
<svg class="a" style="left:412.5px;top:553px" width="15" height="11" viewBox="0 0 15 11">
<rect x="0" y="0" width="15" height="11" rx="2" fill="#22d05a"/>
<path d="M7.5 2.2 L10.2 5 H8.3 V8.8 H6.7 V5 H4.8Z" fill="#0b2a14"/></svg>
<div class="a t" style="left:386.90px;top:568.74px;font-size:6.8px;color:#2fd060;font-weight:normal;font-style:normal;transform:scaleX(0.9443);transform-origin:0 0;">Демонстрация экрана</div>
<svg class="a" style="left:448.0px;top:556.5px" width="6" height="4" viewBox="0 0 6 4"><path d="M0.8 3.2 L3 1 L5.2 3.2" stroke="#9a9a9a" stroke-width="1" fill="none"/></svg>
<svg class="a" style="left:473px;top:551.5px" width="12" height="14" viewBox="0 0 12 14">
<path d="M1.8 0.5 H8 L11.5 4 V12.2 Q11.5 13.5 10.2 13.5 H1.8 Q0.5 13.5 0.5 12.2 V1.8 Q0.5 0.5 1.8 0.5Z" fill="#d2d2d2"/>
<path d="M8 0.5 V4 H11.5" fill="#888"/>
<path d="M3.5 9.5 L5.5 7 L7 8.5 L8.5 6.5" stroke="#555" stroke-width="1.2" fill="none"/></svg>
<div class="a t" style="left:468.00px;top:568.74px;font-size:6.8px;color:#c8c8c8;font-weight:normal;font-style:normal;transform:scaleX(0.9585);transform-origin:0 0;">Сводка</div>
<svg class="a" style="left:515.5px;top:551.5px" width="13" height="13" viewBox="0 0 13 13">
<circle cx="6.5" cy="6.5" r="6" fill="#8a8a8a"/><circle cx="6.5" cy="6.5" r="3.6" fill="#cfcfcf"/></svg>
<div class="a t" style="left:511.00px;top:568.74px;font-size:6.8px;color:#c8c8c8;font-weight:normal;font-style:normal;transform:scaleX(0.9770);transform-origin:0 0;">Запись</div>
<svg class="a" style="left:568.5px;top:552.5px" width="12" height="12" viewBox="0 0 12 12">
<rect x="0.3" y="0.3" width="5" height="5" rx="0.8" fill="#d2d2d2"/><rect x="6.7" y="0.3" width="5" height="5" rx="0.8" fill="#d2d2d2"/>
<rect x="0.3" y="6.7" width="5" height="5" rx="0.8" fill="#d2d2d2"/><rect x="6.7" y="6.7" width="5" height="5" rx="0.8" fill="#d2d2d2"/></svg>
<div class="a t" style="left:547.70px;top:568.74px;font-size:6.8px;color:#c8c8c8;font-weight:normal;font-style:normal;transform:scaleX(0.9336);transform-origin:0 0;">Сессионные залы</div>
<svg class="a" style="left:620px;top:552.5px" width="14" height="11" viewBox="0 0 14 11">
<path d="M1.5 0.8 H12.5 Q13.2 0.8 13.2 1.5 V9.5 Q13.2 10.2 12.5 10.2 H4.5 Q1 10.2 0.8 6.5 V1.5 Q0.8 0.8 1.5 0.8Z" stroke="#d2d2d2" stroke-width="1.3" fill="none"/></svg>
<div class="a t" style="left:609.40px;top:568.74px;font-size:6.8px;color:#c8c8c8;font-weight:normal;font-style:normal;transform:scaleX(0.9896);transform-origin:0 0;">Поддержка</div>
<svg class="a" style="left:665px;top:551.5px" width="13" height="14" viewBox="0 0 13 14">
<circle cx="5.8" cy="7.4" r="5.2" fill="#d2d2d2"/>
<path d="M3.4 8.4 Q5.8 11 8.2 8.4" stroke="#555" stroke-width="1" fill="none"/>
<circle cx="4.2" cy="6" r="0.8" fill="#555"/><circle cx="7.4" cy="6" r="0.8" fill="#555"/>
<path d="M10.6 0.4 V3.8 M8.9 2.1 H12.3" stroke="#d2d2d2" stroke-width="1.1"/></svg>
<div class="a t" style="left:657.80px;top:568.74px;font-size:6.8px;color:#c8c8c8;font-weight:normal;font-style:normal;transform:scaleX(0.9670);transform-origin:0 0;">Реакции</div>
<svg class="a" style="left:682.0px;top:556.5px" width="6" height="4" viewBox="0 0 6 4"><path d="M0.8 3.2 L3 1 L5.2 3.2" stroke="#9a9a9a" stroke-width="1" fill="none"/></svg>
<svg class="a" style="left:709.5px;top:552.5px" width="12" height="12" viewBox="0 0 12 12">
<path d="M1 4 V1 H4 M8 1 H11 V4 M11 8 V11 H8 M4 11 H1 V8" stroke="#d2d2d2" stroke-width="1.3" fill="none"/>
<rect x="4" y="4" width="4" height="4" fill="#888"/></svg>
<div class="a t" style="left:695.90px;top:568.74px;font-size:6.8px;color:#c8c8c8;font-weight:normal;font-style:normal;transform:scaleX(1.0080);transform-origin:0 0;">Приложения</div>
<svg class="a" style="left:730.6px;top:556.5px" width="6" height="4" viewBox="0 0 6 4"><path d="M0.8 3.2 L3 1 L5.2 3.2" stroke="#9a9a9a" stroke-width="1" fill="none"/></svg>
<svg class="a" style="left:765.5px;top:552.5px" width="12" height="12" viewBox="0 0 12 12">
<rect x="0.7" y="0.7" width="10.6" height="8" rx="1" stroke="#d2d2d2" stroke-width="1.3" fill="none"/>
<rect x="5" y="9.2" width="6.5" height="2" fill="#d2d2d2"/></svg>
<div class="a t" style="left:743.75px;top:568.74px;font-size:6.8px;color:#c8c8c8;font-weight:normal;font-style:normal;transform:scaleX(0.9921);transform-origin:0 0;">Доски сообщений</div>
<svg class="a" style="left:793.5px;top:556.5px" width="6" height="4" viewBox="0 0 6 4"><path d="M0.8 3.2 L3 1 L5.2 3.2" stroke="#9a9a9a" stroke-width="1" fill="none"/></svg>
<svg class="a" style="left:825.5px;top:551.5px" width="10" height="14" viewBox="0 0 10 14">
<rect x="0.7" y="0.7" width="8.6" height="11.5" rx="1" stroke="#d2d2d2" stroke-width="1.3" fill="none"/>
<path d="M3 3.5 H7 M3 6 H6" stroke="#d2d2d2" stroke-width="1"/><rect x="4" y="11" width="5.5" height="2.5" fill="#d2d2d2"/></svg>
<div class="a t" style="left:810.00px;top:568.74px;font-size:6.8px;color:#c8c8c8;font-weight:normal;font-style:normal;transform:scaleX(1.0191);transform-origin:0 0;">Примечания</div>
<svg class="a" style="left:845.0px;top:556.5px" width="6" height="4" viewBox="0 0 6 4"><path d="M0.8 3.2 L3 1 L5.2 3.2" stroke="#9a9a9a" stroke-width="1" fill="none"/></svg>
<div class="a" style="left:971.20px;top:556.50px;width:51.20px;height:14.30px;background:#cf2a30;border-radius:4px"></div>
<div class="a t" style="left:977.70px;top:560.37px;font-size:7px;color:#ffffff;font-weight:bold;font-style:normal;transform:scaleX(0.8923);transform-origin:0 0;">Завершение</div>
</body></html>
